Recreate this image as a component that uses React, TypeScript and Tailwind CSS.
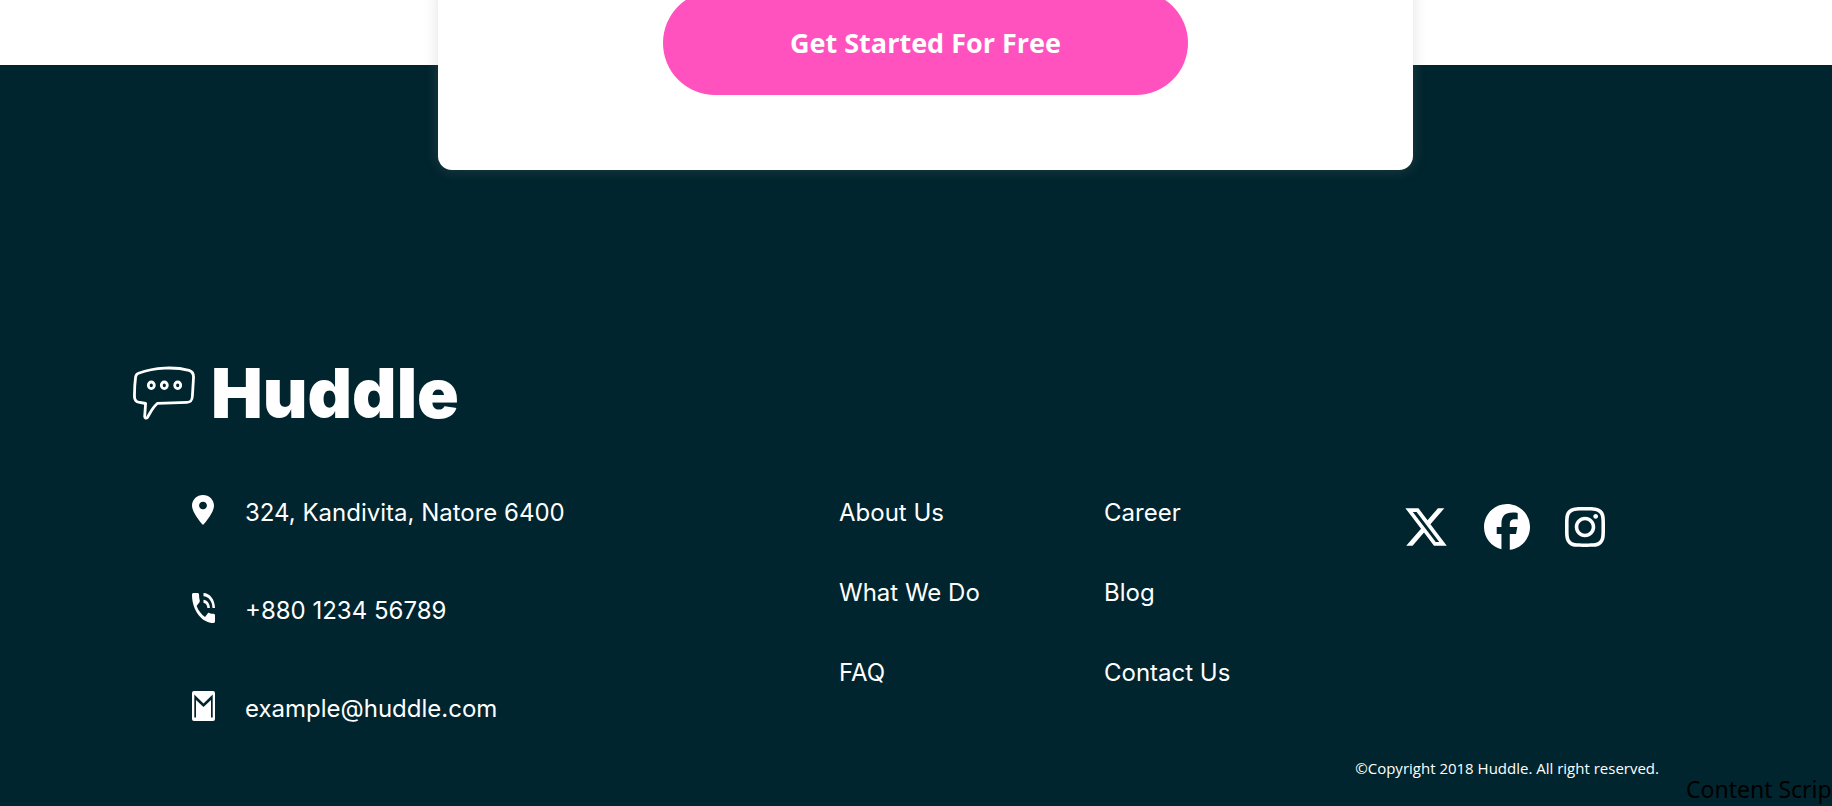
import type { ReactNode } from "react";
import { FaFacebook, FaInstagram, FaXTwitter } from "react-icons/fa6";

function BubbleLogo() {
  return (
    <svg viewBox="0 0 62 54" className="h-[54px] w-[62px] shrink-0" fill="none" stroke="currentColor" strokeWidth="2.8" strokeLinejoin="round" aria-hidden="true">
      <path d="M5.500 7.200C22 1.200 42 .6 56 4.400C60 5.700 60.800 8 60.500 12L59.400 30C59.100 34.500 58 36.200 54 36.400L24.500 37.300C19.500 41.500 17.500 46.500 14.500 51.300C13.300 52.800 11.600 52.300 11.700 50.300L12.600 37.500L5.500 36.200C2.300 35.500 1.600 34 1.500 31C1.400 24 1.800 17 2.600 11C2.900 9 3.500 7.900 5.500 7.200Z" />
      <ellipse cx="18.300" cy="19.300" rx="3" ry="3.300" />
      <ellipse cx="31.300" cy="19.300" rx="3" ry="3.300" />
      <ellipse cx="44.700" cy="19.300" rx="3" ry="3.300" />
    </svg>
  );
}

function PinIcon() {
  return (
    <svg viewBox="5 2 14 20" preserveAspectRatio="none" className="h-[30px] w-[22px]" fill="currentColor" aria-hidden="true">
      <path d="M12 2C8.130 2 5 5.130 5 9c0 5.250 7 13 7 13s7-7.750 7-13c0-3.870-3.130-7-7-7zm0 9.500c-1.380 0-2.500-1.120-2.500-2.500s1.120-2.500 2.500-2.500 2.500 1.120 2.500 2.500-1.120 2.500-2.500 2.500z" />
    </svg>
  );
}

function PhoneIcon() {
  return (
    <svg viewBox="3 3 18 18" preserveAspectRatio="none" className="h-[30px] w-[23px]" fill="currentColor" aria-hidden="true">
      <path d="M20 15.500c-1.250 0-2.450-.2-3.570-.57-.35-.11-.74-.03-1.020.24l-2.200 2.200c-2.830-1.440-5.150-3.750-6.590-6.590l2.200-2.210c.28-.26.36-.65.25-1C8.700 6.450 8.500 5.250 8.500 4c0-.55-.45-1-1-1H4c-.55 0-1 .45-1 1 0 9.390 7.610 17 17 17 .55 0 1-.45 1-1v-3.500c0-.55-.45-1-1-1zM19 12h2c0-4.970-4.030-9-9-9v2c3.870 0 7 3.130 7 7zm-4 0h2c0-2.760-2.240-5-5-5v2c1.660 0 3 1.340 3 3z" />
    </svg>
  );
}

function MailIcon() {
  return (
    <svg viewBox="0 0 23 30" className="h-[30px] w-[23px]" aria-hidden="true">
      <rect width="23" height="30" rx="2" fill="currentColor" />
      <path d="M2.300 3.500L11.500 12.500L20.700 3.500V26.500H19V9L11.500 16L4 9V26.500H2.300Z" fill="#00252e" />
    </svg>
  );
}

function Contact({ icon, children }: { icon: ReactNode; children: ReactNode }) {
  return (
    <li className="flex items-start">
      <span className="w-[53px] shrink-0">{icon}</span>
      {children}
    </li>
  );
}

function LinkColumn({ items }: { items: string[] }) {
  return (
    <ul className="flex flex-col gap-11">
      {items.map((item) => (
        <li key={item}>
          <a href="#">{item}</a>
        </li>
      ))}
    </ul>
  );
}

export default function App() {
  return (
    <div className="relative flex min-h-screen flex-col overflow-hidden bg-white font-['Open_Sans',sans-serif]">
      <section className="relative z-10 -mt-3 flex justify-center pl-[19px]">
        <div className="flex w-[975px] max-w-full justify-center rounded-b-[14px] bg-white pt-[3px] pb-[75px] shadow-[0_0_14px_rgba(136,136,136,0.25)]">
          <button type="button" className="h-[104px] w-[525px] rounded-full bg-[#ff52bf] text-[27px] font-bold text-white">
            Get Started For Free
          </button>
        </div>
      </section>

      <footer className="-mt-[105px] grow bg-[#00252e] pt-[300px] text-white">
        <div className="flex h-14 items-center gap-4 pl-[133px]">
          <BubbleLogo />
          <span className="font-['Inter',sans-serif] text-[69px] leading-[56px] font-black">Huddle</span>
        </div>

        <div className="mt-[74px] grid grid-cols-[647fr_265fr_299fr_429fr] pl-48 font-['Inter',sans-serif] text-2xl leading-9">
          <ul className="flex flex-col gap-[62px]">
            <Contact icon={<PinIcon />}>324, Kandivita, Natore 6400</Contact>
            <Contact icon={<PhoneIcon />}>+880 1234 56789</Contact>
            <Contact icon={<MailIcon />}>example@huddle.com</Contact>
          </ul>
          <LinkColumn items={["About Us", "What We Do", "FAQ"]} />
          <LinkColumn items={["Career", "Blog", "Contact Us"]} />
          <div className="flex items-start gap-[35px] pt-[9px]">
            <a href="#" aria-label="X"><FaXTwitter className="size-[46px]" /></a>
            <a href="#" aria-label="Facebook"><FaFacebook className="size-[46px]" /></a>
            <a href="#" aria-label="Instagram"><FaInstagram className="h-[46px] w-10" /></a>
          </div>
        </div>

        <p className="mt-[31px] pr-[173px] text-right text-[15px] leading-5">©Copyright 2018 Huddle. All right reserved.</p>
      </footer>

      <div className="absolute right-0 bottom-0 z-20 w-[146px] overflow-hidden font-['Noto_Sans',sans-serif] text-[23px] leading-[34px] whitespace-nowrap text-black">
        Content Script
      </div>
    </div>
  );
}
